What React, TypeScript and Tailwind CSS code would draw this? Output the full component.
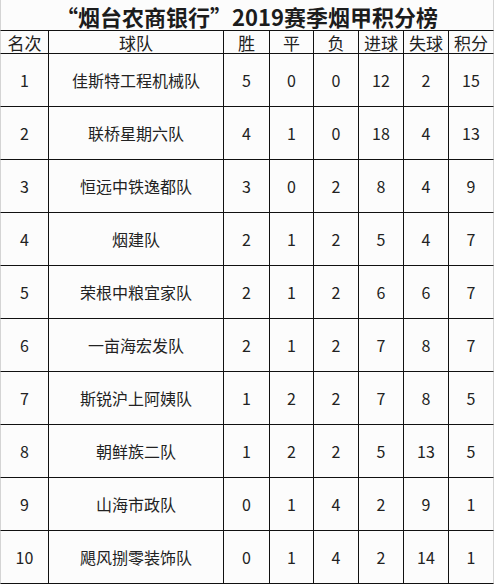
const rows: [string, string, number, number, number, number, number, number][] = [
  ['1', '佳斯特工程机械队', 5, 0, 0, 12, 2, 15],
  ['2', '联桥星期六队', 4, 1, 0, 18, 4, 13],
  ['3', '恒远中铁逸都队', 3, 0, 2, 8, 4, 9],
  ['4', '烟建队', 2, 1, 2, 5, 4, 7],
  ['5', '荣根中粮宜家队', 2, 1, 2, 6, 6, 7],
  ['6', '一亩海宏发队', 2, 1, 2, 7, 8, 7],
  ['7', '斯锐沪上阿姨队', 1, 2, 2, 7, 8, 5],
  ['8', '朝鲜族二队', 1, 2, 2, 5, 13, 5],
  ['9', '山海市政队', 0, 1, 4, 2, 9, 1],
  ['10', '飓风捌零装饰队', 0, 1, 4, 2, 14, 1],
]

const headers = ['名次', '球队', '胜', '平', '负', '进球', '失球', '积分']

// 每列的右边框：最后一列是浅灰色
function cellClass(i: number) {
  const base = 'flex items-center justify-center border-b border-b-[#111]'
  if (i === 0) return `${base} border-l border-l-[#d4d4d4] border-r border-r-[#111]`
  if (i === 7) return `${base} border-r border-r-[#d4d4d4]`
  return `${base} border-r border-r-[#111]`
}

export default function App() {
  return (
    <div
      className="w-[494px] h-[584px] bg-[#fcfcfc] text-[#222] overflow-hidden"
      style={{ fontFamily: '"Noto Sans CJK SC", "Noto Sans", sans-serif' }}
    >
      {/* 标题 */}
      <div className="h-[31px] flex items-center justify-center border-b border-b-[#111] border-x border-x-[#d4d4d4] text-[22px] font-bold leading-none text-[#1c1c1c] pt-px">
        “烟台农商银行”2019赛季烟甲积分榜
      </div>

      {/* 表格 */}
      <div className="grid grid-cols-[49px_175px_46px_44px_45px_45px_45px_45px]">
        {headers.map((h, i) => (
          <div key={h} className={`${cellClass(i)} h-[23px] text-[17px] leading-none`}>
            {h}
          </div>
        ))}
        {rows.map((r) =>
          r.map((v, i) => (
            <div key={`${r[0]}-${i}`} className={`${cellClass(i)} h-[53px] text-[16px] leading-none`}>
              {v}
            </div>
          ))
        )}
      </div>
    </div>
  )
}
